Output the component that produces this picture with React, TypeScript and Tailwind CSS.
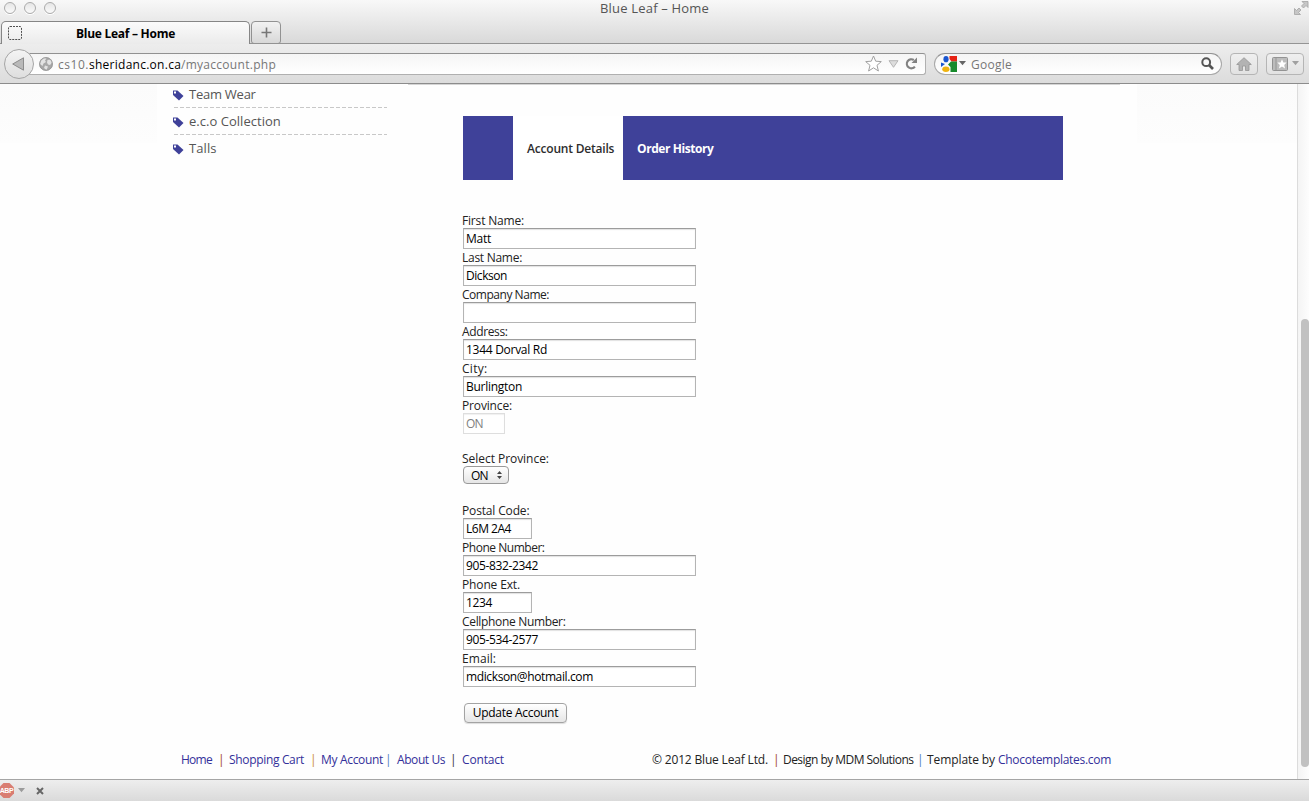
import React from 'react';

function Field({ label, labelClass, value, valueClass, width, disabled }: {
  label: string; labelClass: string; value: string; valueClass: string; width: string; disabled?: boolean;
}) {
  return (
    <label className="block">
      <span className={`-ml-px block h-4 whitespace-nowrap leading-[18px] text-[#222] ${labelClass}`}>{label}</span>
      <input
        defaultValue={value}
        disabled={disabled}
        className={`block h-[21px] border bg-white pl-[2px] leading-[19px] outline-none ${width} ${valueClass} ${
          disabled
            ? 'border-[#dedede] text-[#808080] shadow-[inset_0_1px_1px_#f0f0f0]'
            : 'border-[#b4b4b4] border-t-[#9c9c9c] font-medium text-black shadow-[inset_0_1px_1px_#e2e2e2]'
        }`}
      />
    </label>
  );
}

function Tag() {
  return (
    <svg width="11" height="11" viewBox="0 0 11 11" className="relative top-px shrink-0">
      <path d="M0 .5h4.5L10.5 6 6 10.5 0 5z" fill="#3f4199" />
      <rect x="1" y="1.5" width="2" height="2" fill="#fff" />
    </svg>
  );
}

function TitleBar() {
  return (
    <div className="flex h-[44px] flex-col border-b border-[#949494] bg-linear-to-b from-[#f8f8f8] to-[#d9d9d9]">
      <div className="flex h-[21px] shrink-0 items-start justify-between">
        <div className="flex w-[120px] gap-2 pl-1 pt-[2px]">
          {[0, 1, 2].map((i) => (
            <span key={i} className="size-3 rounded-full border border-[#ababab] bg-linear-to-b from-[#e6e6e6] to-[#fafafa] shadow-[0_1px_0_#fff]" />
          ))}
        </div>
        <span className="whitespace-nowrap text-[13px] leading-4 tracking-[0.19px] text-[#555]">Blue Leaf – Home</span>
        <div className="flex w-[120px] justify-end pt-px">
          <svg width="15" height="14" viewBox="0 0 15 14" fill="#c6c6c6" stroke="#a3a3a3" strokeWidth=".8">
            <path d="M8 .5h6v6l-2-2-2.5 2.5-2-2L10 2.500z M0.500 7.500l2 2 2.500-2.500 2 2-2.500 2.500 2 2h-6z" />
          </svg>
        </div>
      </div>
      <div className="flex h-[23px] shrink-0 items-start">
        <div className="-mb-px ml-px flex h-[23px] w-[249px] items-center rounded-t-[5px] border border-b-0 border-[#868686] bg-linear-to-b from-[#fbfbfb] to-[#ebebeb]">
          <svg width="14" height="14" viewBox="0 0 14 14" className="mb-px ml-[6px]" fill="none" stroke="#505050" strokeDasharray="2 1">
            <rect x=".5" y=".5" width="13" height="13" rx="1.500" />
          </svg>
          <span className="ml-[54px] whitespace-nowrap pt-px text-[12px] font-bold leading-4 tracking-[-0.27px] text-black">Blue Leaf – Home</span>
        </div>
        <div className="ml-px flex h-[23px] w-[30px] items-center justify-center rounded-t-[4px] rounded-b-[3px] border border-[#929292] bg-linear-to-b from-[#f2f2f2] to-[#d8d8d8]">
          <svg width="11" height="11" viewBox="0 0 11 11" stroke="#777" strokeWidth="1.600">
            <path d="M5.500.5v10M.5 5.500h10" />
          </svg>
        </div>
      </div>
    </div>
  );
}

function ToolBar() {
  return (
    <div className="flex h-[40px] items-center border-b border-[#8c8c8c] bg-linear-to-b from-[#ededed] to-[#dcdcdc] pl-[4px]">
      <div className="z-10 flex size-[30px] shrink-0 items-center justify-center rounded-full border border-[#a5a5a5] bg-linear-to-b from-[#f4f4f4] to-[#dedede]">
        <svg width="12" height="14" viewBox="0 0 12 14" className="mr-[3px]"><path d="M.7 7 11.500.8v12.400z" fill="#b9b9b9" stroke="#858585" strokeWidth=".9" /></svg>
      </div>
      <div className="-ml-[5px] flex h-[22px] w-[897px] items-center rounded-r-[3px] border border-[#b0b0b0] border-t-[#919191] bg-linear-to-b from-[#f5f5f5] to-white text-[12px] leading-5 text-[#777]">
        <svg width="14" height="14" viewBox="0 0 14 14" className="ml-[9px] shrink-0">
          <circle cx="7" cy="7" r="6.800" fill="#a9a9a9" />
          <path d="M2 3.500 5 1l2.500.5L6 3.500 7 5 4.500 6.500 3.500 9 1 7zM8.500 3l3-.5 1.500 3-2 2.500-2-.5L8 5.500zM6 8.500l3 1-1.500 3.500-2.500-2z" fill="#e3e3e3" />
          <circle cx="7" cy="7" r="6.400" fill="none" stroke="#919191" strokeWidth=".8" />
        </svg>
        <span className="ml-[5px] flex w-[808px] shrink-0 whitespace-nowrap pt-[2px]">
          <span className="w-[31px] tracking-[0.53px]">cs10.</span>
          <span className="w-[92px] tracking-[0.26px] text-black">sheridanc.on.ca</span>
          <span className="tracking-[0.28px]">/myaccount.php</span>
        </span>
        <svg width="17" height="17" viewBox="0 0 17 17" fill="#fff" stroke="#a0a0a0" className="-ml-px shrink-0">
          <path d="M8.500 1l2.200 5.200 5.600.4-4.300 3.700 1.400 5.700-4.900-3.200-4.900 3.200L5 10.300.700 6.600l5.600-.4z" />
        </svg>
        <svg width="11" height="8" viewBox="0 0 11 8" className="ml-[6px] shrink-0"><path d="M1 .7h9L5.500 7.300z" fill="#ddd" stroke="#b5b5b5" /></svg>
        <svg width="13" height="13" viewBox="0 0 13 13" className="ml-[6px] shrink-0">
          <path d="M9.900 9.600A4.500 4.500 0 1 1 8.800 3" fill="none" stroke="#828282" strokeWidth="2.200" />
          <path d="M12 .5V6H6.500z" fill="#828282" />
        </svg>
      </div>
      <div className="ml-2 flex h-[22px] w-[288px] shrink-0 items-center rounded-full border border-[#a8a8a8] border-t-[#919191] bg-linear-to-b from-[#f5f5f5] to-white">
        <svg width="16" height="16" viewBox="0 0 16 16" className="ml-[6px] shrink-0">
          <path d="M8.500 0H16v5.500h-5.500L8.500 3z" fill="#e62315" />
          <path d="M16 5.500V16H9.500V11L7 8.500l3-3z" fill="#178a2c" />
          <ellipse cx="5" cy="3.200" rx="2.600" ry="3.100" fill="#1a56cf" />
          <path d="M0 6.500l4 1.500-4 3z" fill="#1a56cf" />
          <ellipse cx="4.900" cy="13.200" rx="3.600" ry="2.700" fill="#efb310" />
        </svg>
        <svg width="7" height="5" viewBox="0 0 7 5" className="ml-[2px] shrink-0"><path d="M0 0h7L3.500 4.300z" fill="#666" /></svg>
        <span className="ml-[5px] flex-1 pt-[2px] text-[12px] leading-5 tracking-[0.26px] text-[#777]">Google</span>
        <svg width="13" height="13" viewBox="0 0 13 13" className="mr-[7px]" fill="none" stroke="#555">
          <circle cx="5.200" cy="5.200" r="3.900" strokeWidth="2" /><path d="M8 8l4 4" strokeWidth="2.600" />
        </svg>
      </div>
      <div className="ml-2 flex h-[22px] w-7 shrink-0 items-center justify-center rounded-[4px] border border-[#b5b5b5] bg-linear-to-b from-[#efefef] to-[#e2e2e2]">
        <svg width="16" height="14" viewBox="0 0 16 14"><path d="M8 .7 15.300 7.500H13v6H9.500V9h-3v4.500H3v-6H.7z" fill="#b3b3b3" stroke="#949494" strokeWidth=".8" /></svg>
      </div>
      <div className="ml-2 flex h-[22px] w-[38px] shrink-0 items-center rounded-[4px] border border-[#b5b5b5] bg-linear-to-b from-[#efefef] to-[#e2e2e2] pl-[5px]">
        <svg width="16" height="14" viewBox="0 0 16 14">
          <rect x=".5" y=".5" width="15" height="13" rx="1" fill="#bcbcbc" stroke="#939393" />
          <path d="M4 1v12" stroke="#989898" />
          <path d="M10 2.200l1.400 3.200 3.200.2-2.400 2.300.8 3.500-3-1.900-3 1.900.8-3.500-2.400-2.300 3.200-.2z" fill="#fff" />
        </svg>
        <svg width="7" height="5" viewBox="0 0 7 5" className="ml-1"><path d="M0 0h7L3.500 4.300z" fill="#a0a0a0" /></svg>
      </div>
    </div>
  );
}

const categories = [
  { name: 'Team Wear', cls: 'tracking-[-0.25px]' },
  { name: 'e.c.o Collection', cls: 'tracking-[0.03px]' },
  { name: 'Talls', cls: 'tracking-[0.1px]' },
];

function Sidebar() {
  return (
    <ul className="-mt-[3px] ml-[16px] w-[214px]">
      {categories.map((c, i) => (
        <li key={c.name} className="h-[27px]">
          <div className="flex h-[26px] items-center gap-[5px]">
            <Tag />
            <span className={`whitespace-nowrap text-[13px] font-medium leading-5 text-[#555] ${c.cls}`}>{c.name}</span>
          </div>
          {i < 2 && <div className="ml-px h-px bg-[repeating-linear-gradient(90deg,#c8c8c8_0_4px,transparent_4px_6px)]" />}
        </li>
      ))}
    </ul>
  );
}

function Account() {
  return (
    <div className="ml-[76px] w-[600px] pt-8 text-[12px]">
      <nav className="flex h-16 bg-[#3f4199]">
        <a className="ml-[50px] flex w-[110px] items-center whitespace-nowrap bg-white pl-[14px] pt-[2px] font-semibold tracking-[-0.2px] text-[#2d2d2d]">Account Details</a>
        <a className="flex items-center whitespace-nowrap pl-[14px] pt-[2px] font-bold tracking-[-0.42px] text-white">Order History</a>
      </nav>
      <form className="pt-8">
        <Field label="First Name:" labelClass="tracking-[-0.18px]" value="Matt" valueClass="tracking-[-0.25px]" width="w-[233px]" />
        <Field label="Last Name:" labelClass="tracking-[-0.27px]" value="Dickson" valueClass="tracking-[-0.44px]" width="w-[233px]" />
        <Field label="Company Name:" labelClass="tracking-[-0.47px]" value="" valueClass="" width="w-[233px]" />
        <Field label="Address:" labelClass="tracking-[-0.36px]" value="1344 Dorval Rd" valueClass="tracking-[-0.28px]" width="w-[233px]" />
        <Field label="City:" labelClass="tracking-[0.3px]" value="Burlington" valueClass="tracking-[-0.28px]" width="w-[233px]" />
        <Field label="Province:" labelClass="tracking-[-0.15px]" value="ON" valueClass="tracking-[-0.9px]" width="w-[42px]" disabled />
        <div className="mt-4 h-9">
          <span className="-ml-px block h-4 leading-[18px] tracking-[-0.04px] text-[#222]">Select Province:</span>
          <button type="button" className="flex h-[18px] w-[46px] items-center rounded-[4px] border border-[#999] bg-linear-to-b from-white to-[#e6e6e6] pl-[7px] leading-4 text-black">
            <span className="w-[26px] pt-[2px] text-left font-medium tracking-[-0.9px]">ON</span>
            <svg width="5" height="8" viewBox="0 0 5 8" fill="#444"><path d="M0 3 2.500 0 5 3zM0 5h5L2.500 8z" /></svg>
          </button>
        </div>
        <div className="pt-4">
          <Field label="Postal Code:" labelClass="tracking-[-0.15px]" value="L6M 2A4" valueClass="tracking-[-0.48px]" width="w-[69px]" />
          <Field label="Phone Number:" labelClass="tracking-[-0.47px]" value="905-832-2342" valueClass="tracking-[-0.36px]" width="w-[233px]" />
          <Field label="Phone Ext." labelClass="tracking-[-0.14px]" value="1234" valueClass="tracking-[-0.36px]" width="w-[69px]" />
          <Field label="Cellphone Number:" labelClass="tracking-[-0.33px]" value="905-534-2577" valueClass="tracking-[-0.36px]" width="w-[233px]" />
          <Field label="Email:" labelClass="tracking-[0.06px]" value="mdickson@hotmail.com" valueClass="tracking-[-0.38px]" width="w-[233px]" />
        </div>
        <button type="button" className="ml-px mt-4 block h-5 w-[103px] whitespace-nowrap rounded-[4px] border border-[#a3a3a3] bg-linear-to-b from-white to-[#e6e6e6] font-medium leading-[18px] tracking-[-0.3px] text-black shadow-[0_1px_1px_#ddd]">Update Account</button>
      </form>
    </div>
  );
}

function Footer() {
  return (
    <footer className="flex whitespace-nowrap pl-[24px] text-[12px] leading-4 text-[#222]">
      <div className="flex w-[471px] text-[#33309a]">
        <a className="w-[37px] tracking-[-0.73px]">Home</a>
        <span className="w-[11px] text-[#a0401f]">|</span>
        <a className="w-[81px] tracking-[-0.33px]">Shopping Cart</a>
        <span className="w-[11px] text-[#c98a2a]">|</span>
        <a className="w-[64px] tracking-[-0.32px]">My Account</a>
        <span className="w-[12px] text-[#4a80c0]">|</span>
        <a className="w-[53px] tracking-[-0.42px]">About Us</a>
        <span className="w-[12px] text-[#333]">|</span>
        <a className="tracking-[-0.16px]">Contact</a>
      </div>
      <span className="w-[121px] tracking-[-0.17px]">© 2012 Blue Leaf Ltd.</span>
      <span className="w-[10px] text-[#a0401f]">|</span>
      <span className="w-[134px] tracking-[-0.54px]">Design by MDM Solutions</span>
      <span className="w-[10px] text-[#4a80c0]">|</span>
      <span className="w-[71px] tracking-[-0.09px]">Template by</span>
      <a className="tracking-[-0.29px] text-[#33309a]">Chocotemplates.com</a>
    </footer>
  );
}

export default function App() {
  return (
    <div className="flex h-[801px] w-[1309px] flex-col overflow-hidden bg-white font-['Open_Sans',sans-serif]">
      <TitleBar />
      <ToolBar />
      <div className="flex h-[695px] overflow-hidden">
        <main className="flex w-[1297px] bg-[linear-gradient(#fbfbfb,#fdfdfd_59px,#fefefe_59px)]">
          <div className="ml-[157px] flex w-[980px] flex-col bg-[#fefefe]">
            <div className="flex h-[668px] shrink-0">
              <Sidebar />
              <div className="ml-[21px] w-[712px]">
                <div className="-mb-px h-px bg-[#d5d5d5]" />
                <div className="-ml-[21px]"><Account /></div>
              </div>
            </div>
            <Footer />
          </div>
        </main>
        <div className="flex w-3 justify-end border-l border-[#dcdcdc] bg-linear-to-r from-[#f4f4f4] to-[#fdfdfd]">
          <div className="mt-[235px] h-[448px] w-2 rounded-full bg-[#c1c1c1]" />
        </div>
      </div>
      <div className="flex h-[22px] items-center border-t border-[#a5a5a5] bg-linear-to-b from-[#eee] to-[#dadada]">
        <span className="-ml-px flex size-[15px] items-center justify-center bg-[#d97d72] font-['Liberation_Sans',sans-serif] text-[7px] font-bold leading-none tracking-[-0.4px] text-white [clip-path:polygon(30%_0,70%_0,100%_30%,100%_70%,70%_100%,30%_100%,0_70%,0_30%)]">ABP</span>
        <svg width="7" height="5" viewBox="0 0 7 5" className="ml-1"><path d="M0 0h7L3.500 4.300z" fill="#9b9b9b" /></svg>
        <svg width="8" height="8" viewBox="0 0 8 8" className="ml-[11px]"><path d="M1 1l6 6M7 1 1 7" stroke="#666" strokeWidth="2" /></svg>
      </div>
    </div>
  );
}
